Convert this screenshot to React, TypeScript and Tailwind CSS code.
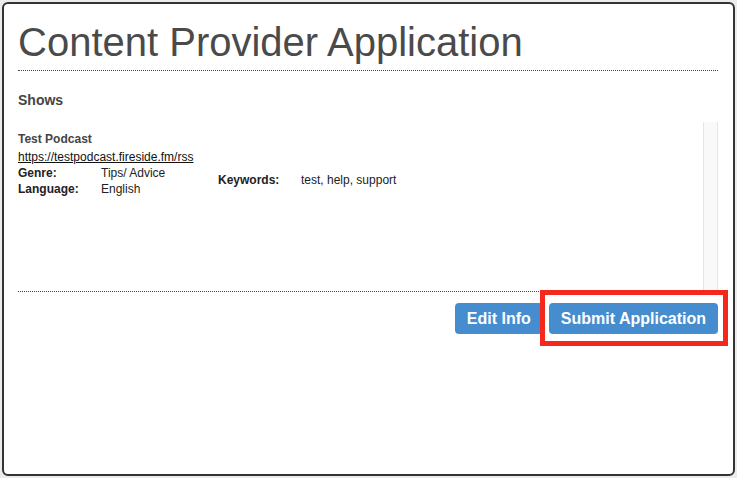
import React from "react";

const show = {
  title: "Test Podcast",
  rss: "https://testpodcast.fireside.fm/rss",
  genre: "Tips/ Advice",
  language: "English",
  keywords: "test, help, support",
};

export default function App() {
  return (
    <div className="w-[737px] h-[478px] bg-[#ececec] p-[2px] font-['Liberation_Sans',Arial,sans-serif]">
      <div className="h-full rounded-[6px] border-2 border-[#333] bg-white pl-[14px] pr-[15px] pt-[16px]">
        <h1 className="border-b border-dotted border-[#444] pb-[6px] text-[40px] leading-[44px] text-[#4a4a4a]">
          Content Provider Application
        </h1>

        <h2 className="mt-[19px] text-[14px] font-bold leading-[20px] text-[#444]">Shows</h2>

        <div className="mt-[12px] flex h-[170px]">
          <div className="flex-1 border-b border-dotted border-[#444] pt-[9px] text-[12px] leading-[16px] text-[#222]">
            <div className="mb-[2px] font-bold text-[#444]">{show.title}</div>
            <a href="#" className="underline text-[#111]">
              {show.rss}
            </a>
            <div className="flex items-center">
              <div className="w-[200px]">
                <div className="flex">
                  <span className="w-[83px] font-bold">Genre:</span>
                  <span>{show.genre}</span>
                </div>
                <div className="flex">
                  <span className="w-[83px] font-bold">Language:</span>
                  <span>{show.language}</span>
                </div>
              </div>
              <div className="-mt-[3px] flex">
                <span className="w-[83px] font-bold">Keywords:</span>
                <span>{show.keywords}</span>
              </div>
            </div>
          </div>
          <div className="w-[15px] border-x border-[#e6e6e6] bg-[#f9f9f9]" />
        </div>

        <div className="mt-[11px] flex justify-end gap-[6px]">
          <button className="h-[31px] rounded-[4px] bg-[#468dcf] px-[12px] text-[16px] font-bold text-white">
            Edit Info
          </button>
          <div className="relative">
            <button className="h-[31px] rounded-[4px] bg-[#468dcf] px-[12px] text-[16px] font-bold text-white">
              Submit Application
            </button>
            <div className="pointer-events-none absolute -left-[9px] -right-[10px] -top-[13px] -bottom-[12px] border-[5px] border-[#f5291b]" />
          </div>
        </div>
      </div>
    </div>
  );
}
